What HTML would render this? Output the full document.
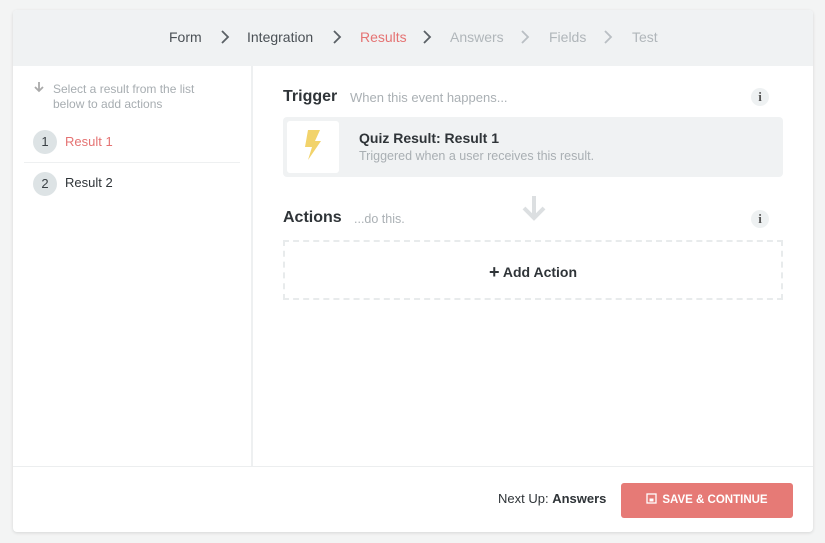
<!DOCTYPE html>
<html><head><style>
*{box-sizing:border-box;margin:0;padding:0}
body{width:825px;height:543px;background:#f3f4f4;font-family:"Liberation Sans",sans-serif;position:relative;overflow:hidden}
.card{position:absolute;left:13px;top:10px;width:800px;height:522px;background:#fff;border-radius:4px;box-shadow:0 1px 3px rgba(0,0,0,.12);overflow:hidden}
.hdr{position:absolute;left:0;top:0;width:800px;height:56px;background:#f0f2f3}
.crumb{position:absolute;top:19px;font-size:14px;color:#4a5055}
.chev{position:absolute;top:20px}
.side{position:absolute;left:0;top:56px;width:240px;height:400px;border-right:2px solid #eef0f1}
.foot{position:absolute;left:0;top:456px;width:800px;height:66px;border-top:1px solid #eceeef}
.num{position:absolute;width:24px;height:24px;border-radius:12px;background:#dde3e5;color:#3a4045;font-size:13px;text-align:center;line-height:24px}
.info{position:absolute;width:18px;height:18px;border-radius:9px;background:#eef1f2;color:#555;font-size:13px;font-weight:bold;text-align:center;line-height:18px;font-family:"Liberation Serif",serif}
</style></head><body>
<div class="card">
<div class="hdr">
<span class="crumb" style="left:156px">Form</span>
<svg class="chev" style="left:207px" width="10" height="14"><path d="M2 1l6 6-6 6" stroke="#5a6065" stroke-width="1.8" fill="none"/></svg>
<span class="crumb" style="left:234px">Integration</span>
<svg class="chev" style="left:319px" width="10" height="14"><path d="M2 1l6 6-6 6" stroke="#5a6065" stroke-width="1.8" fill="none"/></svg>
<span class="crumb" style="left:347px;color:#e57373">Results</span>
<svg class="chev" style="left:409px" width="10" height="14"><path d="M2 1l6 6-6 6" stroke="#5a6065" stroke-width="1.8" fill="none"/></svg>
<span class="crumb" style="left:437px;color:#b0b6ba">Answers</span>
<svg class="chev" style="left:507px" width="10" height="14"><path d="M2 1l6 6-6 6" stroke="#b9bfc3" stroke-width="1.8" fill="none"/></svg>
<span class="crumb" style="left:536px;color:#b0b6ba">Fields</span>
<svg class="chev" style="left:590px" width="10" height="14"><path d="M2 1l6 6-6 6" stroke="#b9bfc3" stroke-width="1.8" fill="none"/></svg>
<span class="crumb" style="left:619px;color:#b0b6ba">Test</span>
</div>
<div class="side">
<svg style="position:absolute;left:20px;top:15px" width="12" height="12"><path d="M6 1v9M2 6l4 4 4-4" stroke="#aaa" stroke-width="1.8" fill="none"/></svg>
<div style="position:absolute;left:40px;top:16px;font-size:12px;line-height:15px;color:#a7adb1;width:155px">Select a result from the list below to add actions</div>
<div class="num" style="left:20px;top:64px">1</div>
<div style="position:absolute;left:52px;top:68px;font-size:13px;color:#e57373">Result 1</div>
<div style="position:absolute;left:11px;top:96px;width:216px;height:1px;background:#eef0f1"></div>
<div class="num" style="left:20px;top:106px">2</div>
<div style="position:absolute;left:52px;top:109px;font-size:13px;color:#2f3438">Result 2</div>
</div>
<div style="position:absolute;left:270px;top:78px;font-size:16px;font-weight:bold;color:#2f3438">Trigger</div>
<div style="position:absolute;left:337px;top:80px;font-size:13px;color:#aab0b4">When this event happens...</div>
<div class="info" style="left:738px;top:78px">i</div>
<div style="position:absolute;left:270px;top:107px;width:500px;height:60px;background:#f0f2f3;border-radius:4px">
<div style="position:absolute;left:4px;top:4px;width:52px;height:52px;background:#fff;border-radius:3px"></div>
<svg style="position:absolute;left:19px;top:12px" width="22" height="32"><path d="M6 1h12l-5 11h6L6 31l4-13H3z" fill="#f2d36b"/></svg>
<div style="position:absolute;left:76px;top:13px;font-size:14px;font-weight:bold;color:#2f3438">Quiz Result: Result 1</div>
<div style="position:absolute;left:76px;top:32px;font-size:12.5px;color:#a9afb3">Triggered when a user receives this result.</div>
</div>
<svg style="position:absolute;left:506px;top:184px" width="30" height="28"><path d="M15 2v22M5 14l10 10 10-10" stroke="#dcdfe1" stroke-width="4" fill="none"/></svg>
<div style="position:absolute;left:270px;top:199px;font-size:16px;font-weight:bold;color:#2f3438">Actions</div>
<div style="position:absolute;left:341px;top:202px;font-size:12.5px;color:#aab0b4">...do this.</div>
<div class="info" style="left:738px;top:200px">i</div>
<div style="position:absolute;left:270px;top:230px;width:500px;height:60px;border:2px dashed #e8ebec"></div>
<div style="position:absolute;left:476px;top:251px;font-size:14px;font-weight:bold;color:#2f3438"><span style="font-size:18px;position:relative;top:1px">+</span> Add Action</div>
<div class="foot">
<div style="position:absolute;left:485px;top:24px;font-size:13px;color:#2f3438">Next Up: <b>Answers</b></div>
<div style="position:absolute;left:608px;top:16px;width:172px;height:35px;background:#e67a76;border-radius:3px;color:#fff;font-size:11.5px;font-weight:bold;text-align:center;line-height:35px">
<svg width="11" height="11" style="vertical-align:-1px;margin-right:5px"><rect x="1" y="1" width="9" height="9" stroke="#fff" stroke-width="1.3" fill="none"/><rect x="3.5" y="5.5" width="4" height="3" fill="#fff"/></svg>SAVE &amp; CONTINUE</div>
</div>
</div>
</body></html>
